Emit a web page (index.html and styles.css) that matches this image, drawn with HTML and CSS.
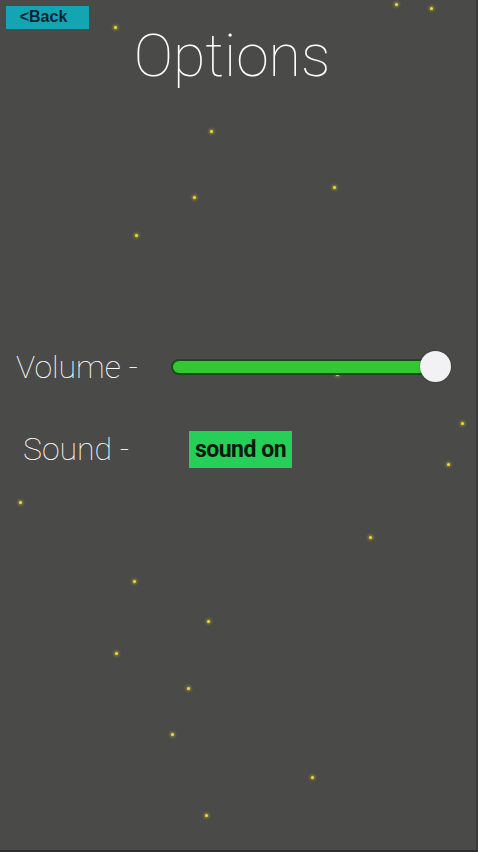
FILE: index.html
```html
<!DOCTYPE html>
<html>
    <head>
        <title>Options</title>
        <meta charset="UTF-8">
        <meta name="viewport" content="width=device-width, initial-scale=1">
        <link rel="stylesheet" href="styles.css">
    </head>
    <body>
        <div id="stars">
            <span class="star" style="left:115px;top:27px"></span>
            <span class="star" style="left:396px;top:4px"></span>
            <span class="star" style="left:431px;top:8px"></span>
            <span class="star" style="left:211px;top:131px"></span>
            <span class="star" style="left:334px;top:187px"></span>
            <span class="star" style="left:194px;top:197px"></span>
            <span class="star" style="left:136px;top:235px"></span>
            <span class="star" style="left:337px;top:374px"></span>
            <span class="star" style="left:462px;top:423px"></span>
            <span class="star" style="left:448px;top:464px"></span>
            <span class="star" style="left:20px;top:502px"></span>
            <span class="star" style="left:370px;top:537px"></span>
            <span class="star" style="left:134px;top:581px"></span>
            <span class="star" style="left:208px;top:621px"></span>
            <span class="star" style="left:116px;top:653px"></span>
            <span class="star" style="left:188px;top:688px"></span>
            <span class="star" style="left:172px;top:734px"></span>
            <span class="star" style="left:312px;top:777px"></span>
            <span class="star" style="left:206px;top:815px"></span>
        </div>

        <div id="screen">
            <div class="topbar">
                <button class="back-button noselect">&lt;Back</button>
            </div>
            <h1 class="title noselect">Options</h1>

            <div class="options">
                <div class="option-row">
                    <span class="option-label volume-label noselect">Volume -</span>
                    <div class="slider">
                        <div class="slider-track"></div>
                        <div class="slider-thumb"></div>
                    </div>
                </div>
                <div class="option-row">
                    <span class="option-label sound-label noselect">Sound -</span>
                    <button class="sound-button noselect">sound on</button>
                </div>
            </div>
        </div>
    </body>
</html>
```
FILE: styles.css
```css
.noselect {
    user-select: none;
    -moz-user-select: none;
    -webkit-user-select: none;
}

html, body {
    margin: 0;
    padding: 0;
}

body {
    width: 478px;
    height: 852px;
    background-color: #4a4a48;
    font-family: Roboto, "Noto Sans", sans-serif;
    position: relative;
    overflow: hidden;
    box-sizing: border-box;
    border-right: 2px solid #3a3a38;
    border-bottom: 2px solid #2e2e2c;
}

#stars .star {
    position: absolute;
    width: 3px;
    height: 3px;
    margin: -1px 0 0 -1px;
    border-radius: 50%;
    background-color: #eedc3a;
    box-shadow: 0 0 3px 1px rgba(220, 200, 40, 0.55);
}

#screen {
    position: relative;
}

.topbar {
    padding: 6px 0 0 6px;
    height: 23px;
}

.back-button {
    display: block;
    width: 83px;
    height: 23px;
    padding: 0 8px 2px 0;
    border: none;
    background-color: #13a6b2;
    color: #0c2230;
    font-family: "Liberation Sans", Arial, sans-serif;
    font-weight: bold;
    font-size: 16px;
    cursor: pointer;
}

.title {
    margin: -13px 0 0 0;
    padding-right: 12px;
    text-align: center;
    color: #ffffff;
    font-weight: 100;
    font-size: 59px;
    line-height: 80px;
}

.options {
    margin-top: 250px;
    display: flex;
    flex-direction: column;
    gap: 40px;
}

.option-row {
    display: flex;
    align-items: center;
    height: 42px;
}

.option-label {
    color: #ffffff;
    font-weight: 100;
    font-size: 32px;
}

.volume-label {
    margin-left: 16px;
    width: 155px;
}

.sound-label {
    margin-left: 23px;
    width: 166px;
}

.slider {
    position: relative;
    width: 282px;
    height: 32px;
    display: flex;
    align-items: center;
}

.slider-track {
    width: 263px;
    height: 12px;
    border: 2px solid #174d17;
    border-radius: 8px;
    background-color: #33c833;
}

.slider-thumb {
    position: absolute;
    left: 249px;
    top: 0;
    width: 31px;
    height: 31px;
    border-radius: 50%;
    background-color: #f2f2f4;
    box-shadow: 0 0 2px rgba(0, 0, 0, 0.4);
}

.sound-button {
    width: 103px;
    height: 37px;
    padding: 0;
    border: none;
    background-color: #25cf58;
    color: #0a1a0c;
    font-family: Roboto, sans-serif;
    font-weight: bold;
    font-size: 23px;
    letter-spacing: -0.5px;
    cursor: pointer;
}
```
